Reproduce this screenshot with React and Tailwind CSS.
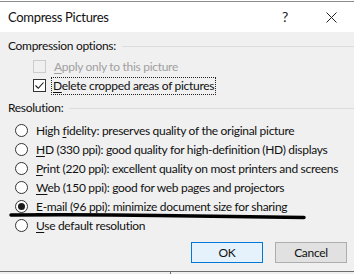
import React from "react";

const U = ({ children }) => <span className="underline underline-offset-2 decoration-1">{children}</span>;

function Radio({ checked }) {
  return (
    <span className="w-[13px] h-[13px] rounded-full border border-[#333333] bg-white flex items-center justify-center shrink-0">
      {checked && <span className="w-[7px] h-[7px] rounded-full bg-[#1a1a1a]" />}
    </span>
  );
}

function RadioRow({ checked, children }) {
  return (
    <div className="h-[19px] flex items-center pl-[15px]">
      <Radio checked={checked} />
      <span className="ml-[8px] text-[#111111] whitespace-nowrap">{children}</span>
    </div>
  );
}

function Header({ children }) {
  return (
    <div className="h-[14px] flex items-center pl-[8px]">
      <span className="whitespace-nowrap text-[#111111]">{children}</span>
      <span className="flex-1 ml-[6px] h-px bg-[#dcdcdc]" />
    </div>
  );
}

export default function App() {
  return (
    <div
      className="relative w-[354px] h-[274px] overflow-hidden bg-[#f0f0f0] text-[12px] leading-none tracking-[-0.3px]"
      style={{ fontFamily: 'Lato, "Noto Sans", sans-serif' }}
    >
      {/* top window edge */}
      <div className="h-px bg-white" />
      <div className="h-px bg-[#8c8c8c]" />
      {/* title bar */}
      <div className="h-[30px] bg-white flex items-center pl-[8px] pr-[16px]">
        <span className="text-[13px] text-[#111111]">Compress Pictures</span>
        <span className="ml-auto text-[14px] text-[#222222] mr-[38px]">?</span>
        <svg width="11" height="11" viewBox="0 0 11 11" className="mr-[1px]">
          <path d="M0.5 0.5 L10.5 10.5 M10.5 0.5 L0.5 10.5" stroke="#222" strokeWidth="1" />
        </svg>
      </div>

      {/* body */}
      <div className="mt-[7px]">
        <Header>Compression options:</Header>
        <div className="mt-[4px] h-[19px] flex items-center pl-[33px]">
          <span className="w-[13px] h-[13px] border border-[#cccccc] bg-[#f0f0f0] shrink-0" />
          <span className="ml-[8px] text-[#a0a0a0] whitespace-nowrap"><U>A</U>pply only to this picture</span>
        </div>
        <div className="h-[19px] flex items-center pl-[33px]">
          <span className="w-[13px] h-[13px] border border-[#333333] bg-white shrink-0 flex items-center justify-center">
            <svg width="11" height="11" viewBox="0 0 11 11">
              <path d="M1.5 5.5 L4.3 8.3 L9.5 2.5" fill="none" stroke="#111" strokeWidth="1.1" />
            </svg>
          </span>
          <span className="ml-[6px] px-[1px] py-[2px] outline outline-1 outline-dotted outline-[#222] text-[#111111] whitespace-nowrap">
            <U>D</U>elete cropped areas of pictures
          </span>
        </div>

        <div className="mt-[6px]">
          <Header>Resolution:</Header>
        </div>
        <div className="mt-[6px]">
          <RadioRow>High <U>f</U>idelity: preserves quality of the original picture</RadioRow>
          <RadioRow><U>H</U>D (330 ppi): good quality for high-definition (HD) displays</RadioRow>
          <RadioRow><U>P</U>rint (220 ppi): excellent quality on most printers and screens</RadioRow>
          <RadioRow><U>W</U>eb (150 ppi): good for web pages and projectors</RadioRow>
          <RadioRow checked><U>E</U>-mail (96 ppi): minimize document size for sharing</RadioRow>
          <RadioRow><U>U</U>se default resolution</RadioRow>
        </div>

        <div className="mt-[7px] flex justify-end gap-[12px] pr-[7px]">
          <button className="w-[72px] h-[21px] border border-[#0078d7] bg-[#e5f1fb] text-[#111111] text-[12px]">OK</button>
          <button className="w-[72px] h-[21px] border border-[#adadad] bg-[#e1e1e1] text-[#111111] text-[12px]">Cancel</button>
        </div>
      </div>

      {/* bottom window edge */}
      <div className="absolute left-0 right-0 top-[271px] h-px bg-[#6e6e6e]" />
      <div className="absolute left-[170px] top-[271px] w-px h-[3px] bg-[#6e6e6e]" />

      {/* hand-drawn underline */}
      <svg className="absolute left-0 top-0 pointer-events-none" width="354" height="274">
        <path d="M11 215 Q 90 214.5 158 215.5 L 304 217.5" fill="none" stroke="#000" strokeWidth="3.5" strokeLinecap="round" />
      </svg>
    </div>
  );
}
